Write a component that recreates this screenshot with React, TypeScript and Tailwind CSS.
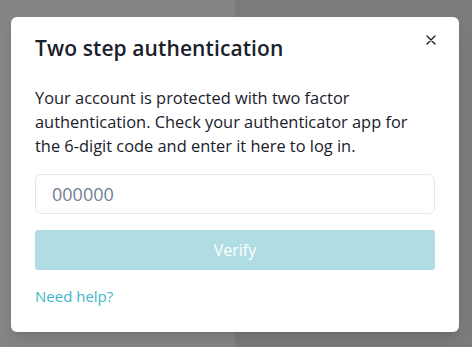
import React from 'react';

const App: React.FC = () => {
  return (
    <div className="relative w-[472px] h-[347px] overflow-hidden" style={{ fontFamily: '"Open Sans", sans-serif' }}>
      {/* page behind the overlay */}
      <div className="flex h-full">
        <div className="w-[235px] bg-[#858585]"></div>
        <div className="flex-1 bg-[#7b7b7b]"></div>
      </div>

      {/* modal */}
      <div className="absolute left-[11px] top-[17px] w-[448px] h-[315px] rounded-md bg-white shadow-lg px-6 pt-[17px]">
        <div className="flex items-start justify-between">
          <h2 className="text-[21px] font-semibold text-[#1a202c] leading-[28px] tracking-[0.1px]">Two step authentication</h2>
          <button className="mt-[1px] mr-[-1px] text-[#1a202c]">
            <svg width="10" height="10" viewBox="0 0 10 10" fill="none" stroke="currentColor" strokeWidth="1.4" strokeLinecap="round">
              <path d="M1 1l8 8M9 1l-8 8" />
            </svg>
          </button>
        </div>

        <p className="mt-[24px] text-[16.4px] leading-[24px] text-[#1a202c]">
          Your account is protected with two factor authentication. Check your authenticator app for the 6-digit code and enter it here to log in.
        </p>

        <input
          className="mt-[16px] block w-full h-[40px] rounded-md border border-[#e2e8f0] px-4 text-[18px] text-[#1a202c] placeholder:text-[#718096] outline-none"
          placeholder="000000"
        />

        <button className="mt-[16px] w-full h-[40px] rounded-[3px] bg-[#b0dde4] text-white text-[16px]">
          Verify
        </button>

        <div className="mt-[14px]">
          <a className="text-[15px] text-[#3fb6c8]">Need help?</a>
        </div>
      </div>
    </div>
  );
};

export default App;
